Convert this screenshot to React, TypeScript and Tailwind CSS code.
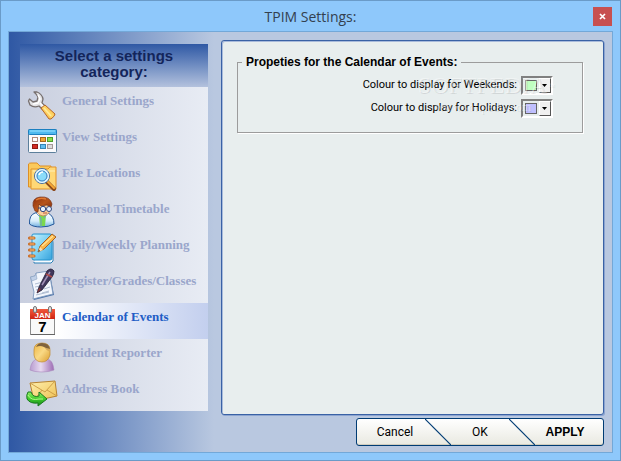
import React from 'react';

const WrenchIcon = () => (
    <svg viewBox="0 0 32 36" className="h-9 w-8 shrink-0" aria-hidden="true">
        <defs>
            <linearGradient id="handle" x1="0" y1="1" x2="1" y2="0">
                <stop offset="0" stopColor="#f29a2a" />
                <stop offset=".5" stopColor="#ffd969" />
                <stop offset="1" stopColor="#f5a93a" />
            </linearGradient>
        </defs>
        <path d="M8 5 L11 5 Q16 7 17 12 L16 16 L20 20 L17 23 L13 19 Q8 21 4 18 L2.500 14 L3.500 12 L7 15 L11 14 L12 10 L10 7 Z" fill="#e4e4e6" stroke="#77706f" strokeWidth="1.300" strokeLinejoin="round" />
        <path d="M12 8 L14 12 L12 16 L7 17 M14 16 L18 20" fill="none" stroke="#fff" strokeWidth="1.500" />
        <path d="M15 21 L19 18 L29 27 Q29 29 25 32 L23 32 Z" fill="url(#handle)" stroke="#b5672a" strokeLinejoin="round" />
        <path d="M18 21 L25 29" stroke="#ffeb9a" strokeWidth="1.500" />
    </svg>
);

const ViewIcon = () => (
    <svg viewBox="0 0 32 36" className="h-9 w-8 shrink-0" aria-hidden="true">
        <rect x="2.500" y="6.500" width="28" height="23" rx="1" fill="#fafafc" stroke="#5c7f9b" />
        <rect x="2.500" y="6.500" width="28" height="5" rx="1" fill="#4fb9ee" stroke="#1b7fc0" />
        <path d="M4 8 H29" stroke="#9be2ff" />
        <g strokeWidth="1">
            <rect x="6.500" y="14.500" width="5" height="4" fill="#fff" stroke="#b08a7c" />
            <rect x="14.500" y="14.500" width="5" height="4" fill="#f0a832" stroke="#a8661b" />
            <rect x="21.500" y="14.500" width="5" height="4" fill="#8ade4e" stroke="#4d9f2a" />
            <rect x="6.500" y="21.500" width="5" height="4" fill="#d32a22" stroke="#8f1914" />
            <rect x="14.500" y="21.500" width="5" height="4" fill="#61bdf0" stroke="#3685b5" />
            <rect x="21.500" y="21.500" width="5" height="4" fill="#dcdcdc" stroke="#a59898" />
        </g>
    </svg>
);

const FolderIcon = () => (
    <svg viewBox="0 0 32 36" className="h-9 w-8 shrink-0" aria-hidden="true">
        <path d="M2.500 28 V5 Q3 4 5 4 H11 L14 7 H25 V28 Z" fill="#fbc95a" stroke="#dd8f26" />
        <path d="M5 30 V10 H22 L24 8 H30 V30 Z" fill="#ffd876" stroke="#e0922a" />
        <path d="M7 12 H29" stroke="#fff0b8" />
        <path d="M20 22 L28 30" stroke="#8b4a1c" strokeWidth="4" strokeLinecap="round" />
        <path d="M21 22 L28 29" stroke="#f7a935" strokeWidth="2" strokeLinecap="round" />
        <circle cx="16" cy="17" r="7.500" fill="#9ee4fb" stroke="#4a6d9d" strokeWidth="1" />
        <circle cx="16" cy="17" r="6.300" fill="none" stroke="#e8f5fd" strokeWidth="1.500" />
        <circle cx="16" cy="17" r="5" fill="#8bdcfa" stroke="#3c7ec1" />
        <path d="M13 16 Q14 13 17 13" fill="none" stroke="#fff" strokeWidth="1.500" />
    </svg>
);

const PersonIcon = () => (
    <svg viewBox="0 0 32 36" className="h-9 w-8 shrink-0" aria-hidden="true">
        <defs>
            <linearGradient id="coat" x1="0" y1="0" x2="0" y2="1">
                <stop offset="0" stopColor="#fff" />
                <stop offset=".6" stopColor="#d7edfb" />
                <stop offset="1" stopColor="#6faede" />
            </linearGradient>
            <linearGradient id="hair" x1="0" y1="0" x2="1" y2="1">
                <stop offset="0" stopColor="#8a2c0c" />
                <stop offset=".5" stopColor="#b7551b" />
                <stop offset="1" stopColor="#76260b" />
            </linearGradient>
        </defs>
        <path d="M3.500 29 Q3 20 9 18 L14 17 L22 18 Q28 21 28 29 Q23 32 15 32 Q7 32 3.500 29 Z" fill="url(#coat)" stroke="#23579a" />
        <path d="M13 20 L20 20 L19 31 H14 Z" fill="#7bd94e" />
        <path d="M10 18 L15 23 L15 32 M22 18 L18 23" fill="none" stroke="#6a9ccc" />
        <path d="M10 9 Q9 20 17 21 Q25 20 25 10 Z" fill="#fbcf9b" stroke="#ba7a4d" strokeWidth=".7" />
        <path d="M7 11 Q6 3 14 2 Q24 1 26 9 L25 12 L21 10 L15 11 L13 9 L12 17 L9 16 Z" fill="url(#hair)" stroke="#6d270d" strokeWidth=".6" />
        <path d="M10 5 Q14 2 20 4" fill="none" stroke="#e07a32" strokeWidth="1.500" />
        <circle cx="17" cy="14" r="2.700" fill="#e6f1ff" stroke="#34477c" />
        <circle cx="23" cy="14" r="2.500" fill="#e6f1ff" stroke="#34477c" />
        <path d="M12 13 H14" stroke="#34477c" />
        <path d="M17 18 H21" stroke="#b75f42" />
    </svg>
);

const NotebookIcon = () => (
    <svg viewBox="0 0 32 36" className="h-9 w-8 shrink-0" aria-hidden="true">
        <defs>
            <linearGradient id="book" x1="0" y1="0" x2="1" y2="1">
                <stop offset="0" stopColor="#c5f1ff" />
                <stop offset=".5" stopColor="#7bd0f3" />
                <stop offset="1" stopColor="#36a2dc" />
            </linearGradient>
        </defs>
        <path d="M8 31 V32 H25 L27 30 V12 L26 4" fill="#f7fbff" stroke="#2a7fb5" />
        <path d="M6 4 Q6 3 8 3 H24 Q26 3 26 5 V27 Q26 29 24 29 H8 Q6 29 6 27 Z" fill="url(#book)" stroke="#2492cd" />
        <g stroke="#c7661c" strokeWidth="3" strokeLinecap="round">
            <path d="M3.500 7 H8 M3.500 13 H8 M3.500 19 H8 M3.500 25 H8" />
        </g>
        <g stroke="#ffc581" strokeLinecap="round">
            <path d="M4 7 H8 M4 13 H8 M4 19 H8 M4 25 H8" />
        </g>
        <path d="M12 21 L14 15 L26 3 L30 6 L18 18 Z" fill="#f9b64b" stroke="#a35f22" strokeLinejoin="round" />
        <path d="M16 15 L27 5" stroke="#ffe295" strokeWidth="1.300" />
        <path d="M12 21 L14 16 L17 19 Z" fill="#f9dfb5" />
        <path d="M12 21 L13 18.500 L14 20 Z" fill="#40372d" />
    </svg>
);

const RegisterIcon = () => (
    <svg viewBox="0 0 32 36" className="h-9 w-8 shrink-0" aria-hidden="true">
        <path d="M7 30 L26 27 L24 7 L28 28 L8 33 Z" fill="#4e75aa" />
        <path d="M4.500 10 L9 9 L10 6 L23 4 L27 27 L7 32 L8 25 Z" fill="#f3f6fc" stroke="#7d97bb" strokeWidth=".9" />
        <path d="M4.500 10 L9 9 L10 6 L11 12 L6 14 Z" fill="#c0d0e8" stroke="#8fa5c3" strokeWidth=".6" />
        <path d="M9 17 L17 15 M9 20 L14 19 M10 23 L13 22 M16 26 L23 24 M18 22 L24 20 M10 28 L23 25" stroke="#afbdd2" />
        <path d="M11 26 L13 20 L21 4 Q25 0 28 4 Q28 7 26 10 L16 23 Z" fill="#40375b" stroke="#211b33" strokeWidth=".8" />
        <path d="M16 18 L24 5" stroke="#a392b8" strokeWidth="1.500" />
        <path d="M20 7 L26 10" stroke="#b04b48" strokeWidth="1.500" />
        <path d="M11 26 L13 21 L15 22 Z" fill="#8c3a34" />
    </svg>
);

const CalendarIcon = () => (
    <svg viewBox="0 0 32 36" className="h-9 w-8 shrink-0" aria-hidden="true">
        <defs>
            <linearGradient id="redbar" x1="0" y1="0" x2="0" y2="1">
                <stop offset="0" stopColor="#f15a3d" />
                <stop offset="1" stopColor="#cf2413" />
            </linearGradient>
        </defs>
        <rect x="4.500" y="6.500" width="24" height="25" fill="#f9f9f9" stroke="#8d8d8d" />
        <path d="M5 31.500 H29" stroke="#666" />
        <rect x="4" y="6" width="25" height="10" fill="url(#redbar)" />
        <rect x="7.500" y="3.500" width="3" height="6" rx="1.500" fill="#dedede" stroke="#777" />
        <rect x="22.500" y="3.500" width="3" height="6" rx="1.500" fill="#dedede" stroke="#777" />
        <text x="16.500" y="15" textAnchor="middle" fontSize="8" fontWeight="bold" fontFamily="Liberation Sans, sans-serif" fill="#fff">JAN</text>
        <text x="16.500" y="29" textAnchor="middle" fontSize="15" fontWeight="bold" fontFamily="Liberation Sans, sans-serif" fill="#000">7</text>
    </svg>
);

const ReporterIcon = () => (
    <svg viewBox="0 0 32 36" className="h-9 w-8 shrink-0" aria-hidden="true">
        <defs>
            <linearGradient id="shirt" x1="0" y1="0" x2="1" y2="0">
                <stop offset="0" stopColor="#b79bd0" />
                <stop offset=".45" stopColor="#e7daf0" />
                <stop offset="1" stopColor="#9c6bb4" />
            </linearGradient>
            <linearGradient id="face" x1="0" y1="0" x2="1" y2="1">
                <stop offset="0" stopColor="#eeb544" />
                <stop offset=".5" stopColor="#f9d985" />
                <stop offset="1" stopColor="#dc9d2d" />
            </linearGradient>
        </defs>
        <path d="M4 31 Q5 20 14 19 H19 Q27 20 28 31 Q23 33 16 33 Q8 33 4 31 Z" fill="url(#shirt)" stroke="#a98abc" strokeWidth=".6" />
        <path d="M8 11 Q8 4 16 4 Q24 4 24 11 V16 Q22 23 16 23 Q9 23 8 16 Z" fill="url(#face)" stroke="#bf8b31" strokeWidth=".7" />
        <path d="M10 8 Q12 4 16 4 Q23 4 24 10 Q20 10 18 8 Q14 6 10 8 Z" fill="#80633c" />
        <path d="M18 8 Q21 10 24 10 V13 Q20 11 18 8 Z" fill="#d9ab58" />
    </svg>
);

const EnvelopeIcon = () => (
    <svg viewBox="0 0 32 36" className="h-9 w-8 shrink-0" aria-hidden="true">
        <defs>
            <linearGradient id="mail" x1="0" y1="0" x2="1" y2="1">
                <stop offset="0" stopColor="#fff0ae" />
                <stop offset="1" stopColor="#eebf51" />
            </linearGradient>
            <linearGradient id="arrow" x1="0" y1="0" x2="0" y2="1">
                <stop offset="0" stopColor="#95f267" />
                <stop offset=".5" stopColor="#3ecb2b" />
                <stop offset="1" stopColor="#16831a" />
            </linearGradient>
        </defs>
        <path d="M4 8 L29 6 L31 21 L8 26 Z" fill="url(#mail)" stroke="#b78331" strokeLinejoin="round" />
        <path d="M4 8 L19 17 L29 6 M8 26 L16 15 M31 21 L21 15" fill="none" stroke="#c99842" strokeWidth=".9" />
        <path d="M2 17 Q0 20 1 24 Q4 29 12 28 V31 L21 24 L13 17 V21 Q7 23 5 17 Z" fill="url(#arrow)" stroke="#1b7920" strokeLinejoin="round" />
        <path d="M2 20 Q5 26 13 24 H17" fill="none" stroke="#b4f78c" />
    </svg>
);

const categories = [
    { label: 'General Settings', Icon: WrenchIcon },
    { label: 'View Settings', Icon: ViewIcon },
    { label: 'File Locations', Icon: FolderIcon },
    { label: 'Personal Timetable', Icon: PersonIcon },
    { label: 'Daily/Weekly Planning', Icon: NotebookIcon },
    { label: 'Register/Grades/Classes', Icon: RegisterIcon },
    { label: 'Calendar of Events', Icon: CalendarIcon, active: true },
    { label: 'Incident Reporter', Icon: ReporterIcon },
    { label: 'Address Book', Icon: EnvelopeIcon },
];

const TitleBar = () => (
    <header className="flex h-[29px] shrink-0 items-center">
        <h1 className="flex-1 pl-5 text-center font-['Open_Sans',sans-serif] text-sm text-[#33404f]">TPIM Settings:</h1>
        <button aria-label="Close" className="mr-px flex h-[19px] w-[19px] items-center justify-center bg-[#c75050]">
            <svg viewBox="0 0 7 7" className="h-[7px] w-[7px]" aria-hidden="true">
                <path d="M1 1 L6 6 M6 1 L1 6" stroke="#fff" strokeWidth="1.700" />
            </svg>
        </button>
    </header>
);

const Sidebar = () => (
    <nav className="w-[188px] shrink-0 self-start">
        <h2 className="h-[43px] bg-linear-to-b from-[#2f58a4] to-[#b4c2dd] pt-1 text-center text-[15px] leading-4 font-bold text-[#13255b]">
            Select a settings
            <br />
            category:
        </h2>
        <ul className="bg-linear-to-r from-[#c9cfdf] to-[#e8ecf4] font-['Liberation_Serif',serif] text-[13px] leading-5 font-bold">
            {categories.map(({ label, Icon, active }) => (
                <li key={label}>
                    <a
                        href="#"
                        className={
                            active
                                ? 'flex h-9 gap-1 bg-linear-to-r from-white from-20% to-[#c3cfee] pl-1.5 text-[#215cc6]'
                                : 'flex h-9 gap-1 pl-1.5 text-[#9aa6cb]'
                        }
                    >
                        <Icon />
                        <span className="pt-1 whitespace-nowrap">{label}</span>
                    </a>
                </li>
            ))}
        </ul>
    </nav>
);

type ColourSelectProps = { id: string; label: string; value: string; swatch: string };

const ColourSelect = ({ id, label, value, swatch }: ColourSelectProps) => (
    <div className="flex items-center justify-end gap-1">
        <label htmlFor={id} className="pb-0.5">{label}</label>
        <div className="relative h-[19px] w-8">
            <select id={id} defaultValue={value} className="block h-full w-full appearance-none border-2 border-t-[#808080] border-r-white border-b-white border-l-[#808080] bg-[#e8eeee]">
                <option value={value}></option>
            </select>
            <div className="pointer-events-none absolute inset-0.5 flex justify-between">
                <span className={`m-0.5 w-3 border border-[#666] ${swatch}`} />
                <span className="flex w-[13px] items-center justify-center border border-t-white border-r-[#555] border-b-[#555] border-l-white bg-[#f0f0f0]">
                    <svg viewBox="0 0 5 3" className="h-[3px] w-[5px]" aria-hidden="true">
                        <path d="M0 0 H5 L2.500 3 Z" fill="#000" />
                    </svg>
                </span>
            </div>
        </div>
    </div>
);

const CalendarPanel = () => (
    <main className="relative flex-1 rounded-[3px] border border-[#3a62a5] bg-[#e8eeee] pt-[13px] pr-5 pl-[15px] shadow-[inset_1px_1px_0_#a9bbdb,1px_1px_0_#8ba4d0]">
        <fieldset className="h-[79px] border border-[#9c9c9c] pr-[29px] pl-7 shadow-[1px_1px_0_#fff]">
            <legend className="-ml-6 px-1 text-xs leading-4 font-bold">Propeties for the Calendar of Events:</legend>
            <div className="flex flex-col gap-1 pt-1.5 font-[Roboto,sans-serif] text-[11px] leading-4">
                <ColourSelect id="weekends" label="Colour to display for Weekends:" value="#c0ffc0" swatch="bg-[#c0ffc0]" />
                <ColourSelect id="holidays" label="Colour to display for Holidays:" value="#c0c0ff" swatch="bg-[#c0c0ff]" />
            </div>
        </fieldset>
        <div className="pointer-events-none absolute top-8 right-12 text-right font-['Liberation_Serif',serif] text-white/40 [text-shadow:1px_1px_0_#00000018]">
            <p className="text-2xl leading-6">SOFTPEDIA<sup className="text-[8px]">™</sup></p>
            <p className="pr-6 text-xs leading-5">www.softpedia.com</p>
        </div>
    </main>
);

const Divider = () => (
    <svg viewBox="0 0 26 26" className="h-[26px] w-[26px] shrink-0" aria-hidden="true">
        <path d="M0 0 L26 26" stroke="#003c74" strokeWidth="1.200" />
    </svg>
);

const DialogButtons = () => (
    <footer className="mt-[3px] flex justify-end">
        <div className="flex h-7 w-[248px] rounded-[3px] border border-[#003c74] bg-linear-to-b from-white to-[#e9e9e1] text-xs text-black shadow-[inset_0_-1px_0_#d0cdbf]">
            <button className="flex-1 pl-2 font-[Roboto,sans-serif]">Cancel</button>
            <Divider />
            <button className="w-[58px] font-[Roboto,sans-serif]">OK</button>
            <Divider />
            <button className="flex-1 pr-2 font-bold">APPLY</button>
        </div>
    </footer>
);

const App: React.FC = () => {
    return (
        <div className="flex min-h-screen flex-col border border-[#6a9bc8] bg-[#8ec8fb] px-[7px] pt-px pb-[7px] font-['Liberation_Sans',sans-serif] text-black">
            <TitleBar />
            <div className="flex flex-1 gap-[13px] border border-[#73a8d8] bg-linear-to-r from-[#2f58a4] to-[#b9c8e0] to-[205px] pt-2 pr-2 pb-1.5 pl-[11px]">
                <div className="flex pt-1">
                    <Sidebar />
                </div>
                <div className="flex flex-1 flex-col">
                    <CalendarPanel />
                    <DialogButtons />
                </div>
            </div>
        </div>
    );
};

export default App;
